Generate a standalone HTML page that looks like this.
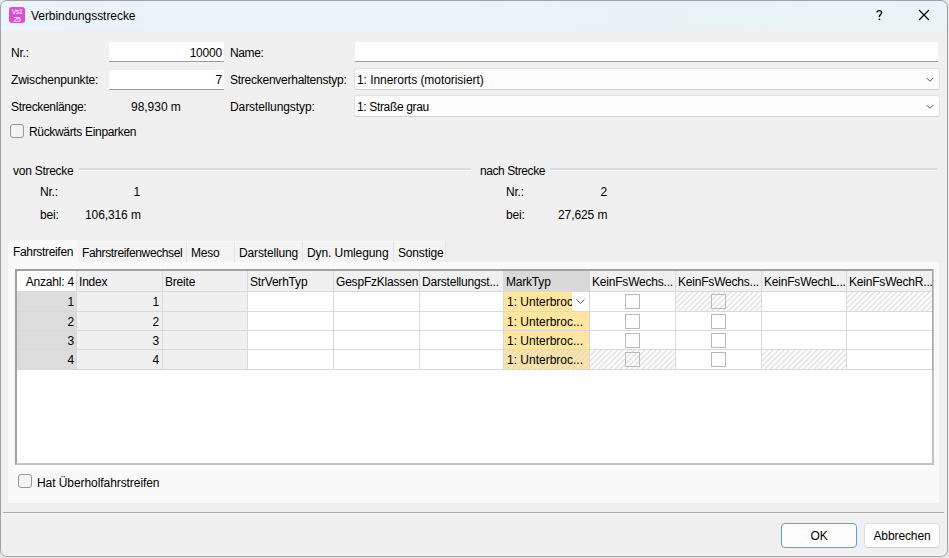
<!DOCTYPE html>
<html><head><meta charset="utf-8">
<style>
html,body{margin:0;padding:0;}
body{width:949px;height:558px;overflow:hidden;position:relative;background:#e6e6e6;font-family:"Liberation Sans",sans-serif;font-size:12px;color:#000;}
.a{position:absolute;}
.t{position:absolute;white-space:nowrap;line-height:14px;letter-spacing:-0.2px;}
#win{position:absolute;left:0;top:0;width:948px;height:557px;background:#f0f0f0;border-radius:7px;overflow:hidden;}
#frame{position:absolute;left:0;top:0;width:948px;height:557px;box-sizing:border-box;border:1px solid #a2a2a2;border-radius:7px;}
#title{position:absolute;left:0;top:0;width:948px;height:30px;background:linear-gradient(90deg,#ebf3fb 0%,#eaf3f8 50%,#e8f4f5 100%);}
.inp{position:absolute;background:#fff;border-bottom:1px solid #9c9c9c;border-radius:2px 2px 0 0;}
.cmb{position:absolute;background:#fdfdfd;border:1px solid #e3e3e3;border-bottom-color:#d0d0d0;border-radius:3px;box-sizing:border-box;width:586px!important;}
.cb{position:absolute;width:12px;height:12px;border:1px solid #979797;border-radius:3px;background:#f4f4f4;}
.hl{position:absolute;height:2px;background:#dcdcdc;box-shadow:0 1px 0 #f8f8f8;}
.tab{position:absolute;top:241px;height:21px;background:#f3f3f3;border-right:1px solid #e4e4e4;border-top:1px solid #f6f6f6;box-sizing:border-box;}
</style></head><body>
<div id="win">
  <div id="title">
    <div class="a" style="left:9px;top:7px;width:16px;height:16px;background:#d94fd3;border-radius:3px;"></div>
    <div class="a" style="left:9px;top:8px;width:16px;font-size:7px;line-height:7.5px;color:#fff;text-align:center;letter-spacing:-0.5px">Vs1<br>25</div>
    <div class="t" style="left:31px;top:9px;letter-spacing:-0.05px">Verbindungsstrecke</div>
    <svg class="a" style="left:876px;top:10px" width="7" height="11"><path d="M0.9 2.6C0.9 1.3 1.9 0.7 3.2 0.7C4.6 0.7 5.6 1.4 5.6 2.7C5.6 4.3 3.4 4.6 3.4 6.6V7" stroke="#000" stroke-width="1.3" fill="none"/><circle cx="3.4" cy="9.3" r="0.9" fill="#000"/></svg>
    <svg class="a" style="left:918px;top:9px" width="12" height="12"><path d="M1 1L11 11M11 1L1 11" stroke="#000" stroke-width="1.2"/></svg>
  </div>

  <!-- top fields -->
  <div class="t" style="left:11px;top:46px;">Nr.:</div>
  <div class="inp" style="left:109px;top:42px;width:115px;height:19px;"></div>
  <div class="t" style="left:109px;top:46px;width:113px;text-align:right;">10000</div>
  <div class="t" style="left:230px;top:46px;;letter-spacing:-0.4px">Name:</div>
  <div class="inp" style="left:355px;top:42px;width:583px;height:19px;"></div>

  <div class="t" style="left:11px;top:73px;;letter-spacing:-0.19px">Zwischenpunkte:</div>
  <div class="inp" style="left:109px;top:70px;width:115px;height:19px;"></div>
  <div class="t" style="left:109px;top:73px;width:113px;text-align:right;">7</div>
  <div class="t" style="left:230px;top:73px;;letter-spacing:-0.25px">Streckenverhaltenstyp:</div>
  <div class="cmb" style="left:354px;top:68px;width:585px;height:22px;"></div>
  <div class="t" style="left:357px;top:73px;;letter-spacing:-0.05px">1: Innerorts (motorisiert)</div>
  <svg class="a" style="left:926px;top:77px" width="9" height="6"><path d="M0.5 0.8L4 4.3L7.5 0.8" stroke="#5a5a5a" fill="none" stroke-width="1"/></svg>

  <div class="t" style="left:11px;top:100px;;letter-spacing:-0.34px">Streckenlänge:</div>
  <div class="t" style="left:131px;top:100px;;letter-spacing:-0.03px">98,930 m</div>
  <div class="t" style="left:230px;top:100px;;letter-spacing:-0.08px">Darstellungstyp:</div>
  <div class="cmb" style="left:354px;top:95px;width:585px;height:22px;"></div>
  <div class="t" style="left:357px;top:100px;;letter-spacing:-0.35px">1: Straße grau</div>
  <svg class="a" style="left:926px;top:104px" width="9" height="6"><path d="M0.5 0.8L4 4.3L7.5 0.8" stroke="#5a5a5a" fill="none" stroke-width="1"/></svg>

  <div class="cb" style="left:10px;top:124px;"></div>
  <div class="t" style="left:29px;top:125px;;letter-spacing:-0.33px">Rückwärts Einparken</div>

  <!-- groups -->
  <div class="t" style="left:13px;top:164px;;letter-spacing:-0.26px">von Strecke</div>
  <div class="hl" style="left:79px;top:168px;width:392px;"></div>
  <div class="t" style="left:40px;top:185px;">Nr.:</div>
  <div class="t" style="left:121px;top:185px;width:19px;text-align:right;">1</div>
  <div class="t" style="left:40px;top:208px;">bei:</div>
  <div class="t" style="left:85px;top:208px;;letter-spacing:-0.1px">106,316 m</div>

  <div class="t" style="left:480px;top:164px;;letter-spacing:-0.42px">nach Strecke</div>
  <div class="hl" style="left:550px;top:168px;width:388px;"></div>
  <div class="t" style="left:506px;top:185px;">Nr.:</div>
  <div class="t" style="left:587px;top:185px;width:20px;text-align:right;">2</div>
  <div class="t" style="left:506px;top:208px;">bei:</div>
  <div class="t" style="left:558px;top:208px;;letter-spacing:-0.09px">27,625 m</div>

  <!-- tabs -->
  <div class="a" style="left:8px;top:262px;width:931px;height:241px;background:#f9f9f9;"></div>
  <div class="tab" style="left:78px;width:109px;"></div>
  <div class="tab" style="left:187px;width:48px;"></div>
  <div class="tab" style="left:235px;width:68px;"></div>
  <div class="tab" style="left:303px;width:91px;"></div>
  <div class="tab" style="left:394px;width:52px;"></div>
  <div class="a" style="left:8px;top:240px;width:70px;height:23px;background:#f9f9f9;"></div>
  <div class="t" style="left:13px;top:245px;;letter-spacing:-0.33px">Fahrstreifen</div>
  <div class="t" style="left:82px;top:246px;;letter-spacing:-0.37px">Fahrstreifenwechsel</div>
  <div class="t" style="left:191px;top:246px;">Meso</div>
  <div class="t" style="left:239px;top:246px;;letter-spacing:-0.15px">Darstellung</div>
  <div class="t" style="left:307px;top:246px;;letter-spacing:-0.09px">Dyn. Umlegung</div>
  <div class="t" style="left:398px;top:246px;;letter-spacing:-0.16px">Sonstige</div>

  <!-- grid -->
  <div id="grid" class="a" style="left:15px;top:269px;width:919px;height:196px;box-sizing:border-box;background:#fff;border-top:2px solid #a0a0a0;border-left:2px solid #a0a0a0;border-right:2px solid #c4c4c4;border-bottom:2px solid #c4c4c4;"></div>
<!--GRID-->
<svg width="0" height="0" style="position:absolute"><defs><pattern id="hatch" patternUnits="userSpaceOnUse" width="5.5" height="5.5"><path d="M-1 6.5L6.5 -1M-1 1L1 -1M4.5 6.5L6.5 4.5" stroke="#d3d3d3" stroke-width="1"/></pattern></defs></svg>
<div class="a" style="left:76px;top:271px;width:1px;height:99px;background:#d9d9d9"></div>
<div class="a" style="left:162px;top:271px;width:1px;height:99px;background:#d9d9d9"></div>
<div class="a" style="left:247px;top:271px;width:1px;height:99px;background:#d9d9d9"></div>
<div class="a" style="left:333px;top:271px;width:1px;height:99px;background:#d9d9d9"></div>
<div class="a" style="left:419px;top:271px;width:1px;height:99px;background:#d9d9d9"></div>
<div class="a" style="left:503px;top:271px;width:1px;height:99px;background:#d9d9d9"></div>
<div class="a" style="left:589px;top:271px;width:1px;height:99px;background:#d9d9d9"></div>
<div class="a" style="left:675px;top:271px;width:1px;height:99px;background:#d9d9d9"></div>
<div class="a" style="left:761px;top:271px;width:1px;height:99px;background:#d9d9d9"></div>
<div class="a" style="left:846px;top:271px;width:1px;height:99px;background:#d9d9d9"></div>
<div class="a" style="left:17px;top:291px;width:915px;height:1px;background:#d9d9d9"></div>
<div class="a" style="left:17px;top:311px;width:915px;height:1px;background:#d9d9d9"></div>
<div class="a" style="left:17px;top:330px;width:915px;height:1px;background:#d9d9d9"></div>
<div class="a" style="left:17px;top:349px;width:915px;height:1px;background:#d9d9d9"></div>
<div class="a" style="left:17px;top:369px;width:915px;height:1px;background:#d9d9d9"></div>
<div class="a" style="left:17px;top:271px;width:59px;height:20px;background:#ffffff"></div>
<div class="t" style="left:17px;top:275px;width:57px;text-align:right">Anzahl: 4</div>
<div class="a" style="left:77px;top:271px;width:85px;height:20px;background:#f0f0f0"></div>
<div class="t" style="left:79px;top:275px;">Index</div>
<div class="a" style="left:163px;top:271px;width:84px;height:20px;background:#f0f0f0"></div>
<div class="t" style="left:165px;top:275px;">Breite</div>
<div class="a" style="left:248px;top:271px;width:85px;height:20px;background:#f0f0f0"></div>
<div class="t" style="left:250px;top:275px;">StrVerhTyp</div>
<div class="a" style="left:334px;top:271px;width:85px;height:20px;background:#f0f0f0"></div>
<div class="t" style="left:336px;top:275px;">GespFzKlassen</div>
<div class="a" style="left:420px;top:271px;width:83px;height:20px;background:#f0f0f0"></div>
<div class="t" style="left:422px;top:275px;">Darstellungst...</div>
<div class="a" style="left:504px;top:271px;width:85px;height:20px;background:#d9d9d9"></div>
<div class="t" style="left:506px;top:275px;">MarkTyp</div>
<div class="a" style="left:590px;top:271px;width:85px;height:20px;background:#f0f0f0"></div>
<div class="t" style="left:592px;top:275px;">KeinFsWechs...</div>
<div class="a" style="left:676px;top:271px;width:85px;height:20px;background:#f0f0f0"></div>
<div class="t" style="left:678px;top:275px;">KeinFsWechs...</div>
<div class="a" style="left:762px;top:271px;width:84px;height:20px;background:#f0f0f0"></div>
<div class="t" style="left:764px;top:275px;">KeinFsWechL...</div>
<div class="a" style="left:847px;top:271px;width:85px;height:20px;background:#f0f0f0"></div>
<div class="t" style="left:849px;top:275px;">KeinFsWechR...</div>
<div class="a" style="left:17px;top:292px;width:59px;height:19px;background-color:#dcdcdc;"></div>
<div class="a" style="left:77px;top:292px;width:85px;height:19px;background-color:#f0f0f0;"></div>
<div class="a" style="left:163px;top:292px;width:84px;height:19px;background-color:#f0f0f0;"></div>
<div class="a" style="left:248px;top:292px;width:85px;height:19px;background-color:#fff;"></div>
<div class="a" style="left:334px;top:292px;width:85px;height:19px;background-color:#fff;"></div>
<div class="a" style="left:420px;top:292px;width:83px;height:19px;background-color:#fff;"></div>
<div class="a" style="left:504px;top:292px;width:85px;height:19px;background-color:#fee5a0;"></div>
<div class="a" style="left:590px;top:292px;width:85px;height:19px;background-color:#fff;"></div>
<div class="a" style="left:676px;top:292px;width:85px;height:19px;background-color:#fff;"></div>
<svg class="a" style="left:676px;top:292px" width="85" height="19"><rect width="85" height="19" fill="url(#hatch)"/></svg>
<div class="a" style="left:762px;top:292px;width:84px;height:19px;background-color:#fff;"></div>
<div class="a" style="left:847px;top:292px;width:85px;height:19px;background-color:#fff;"></div>
<svg class="a" style="left:847px;top:292px" width="85" height="19"><rect width="85" height="19" fill="url(#hatch)"/></svg>
<div class="t" style="left:17px;top:295px;width:57px;text-align:right">1</div>
<div class="t" style="left:77px;top:295px;width:82px;text-align:right">1</div>
<div class="a" style="left:504px;top:292px;width:68px;height:19px;overflow:hidden"><div class="t" style="left:3px;top:3px;letter-spacing:0">1: Unterbroch</div></div>
<div class="a" style="left:572px;top:292px;width:17px;height:19px;background:#fff"></div>
<svg class="a" style="left:576px;top:299px" width="9" height="6"><path d="M0.5 0.5L4.5 4.5L8.5 0.5" stroke="#666" fill="none" stroke-width="1"/></svg>
<div class="a" style="left:625px;top:294px;width:13px;height:13px;border:1px solid #bababa;box-sizing:content-box"></div>
<div class="a" style="left:711px;top:294px;width:13px;height:13px;border:1px solid #bababa;box-sizing:content-box"></div>
<div class="a" style="left:17px;top:312px;width:59px;height:18px;background-color:#dcdcdc;"></div>
<div class="a" style="left:77px;top:312px;width:85px;height:18px;background-color:#f0f0f0;"></div>
<div class="a" style="left:163px;top:312px;width:84px;height:18px;background-color:#f0f0f0;"></div>
<div class="a" style="left:248px;top:312px;width:85px;height:18px;background-color:#fff;"></div>
<div class="a" style="left:334px;top:312px;width:85px;height:18px;background-color:#fff;"></div>
<div class="a" style="left:420px;top:312px;width:83px;height:18px;background-color:#fff;"></div>
<div class="a" style="left:504px;top:312px;width:85px;height:18px;background-color:#fee5a0;"></div>
<div class="a" style="left:590px;top:312px;width:85px;height:18px;background-color:#fff;"></div>
<div class="a" style="left:676px;top:312px;width:85px;height:18px;background-color:#fff;"></div>
<div class="a" style="left:762px;top:312px;width:84px;height:18px;background-color:#fff;"></div>
<div class="a" style="left:847px;top:312px;width:85px;height:18px;background-color:#fff;"></div>
<div class="t" style="left:17px;top:315px;width:57px;text-align:right">2</div>
<div class="t" style="left:77px;top:315px;width:82px;text-align:right">2</div>
<div class="t" style="left:507px;top:315px;letter-spacing:0">1: Unterbroc...</div>
<div class="a" style="left:625px;top:314px;width:13px;height:13px;border:1px solid #bababa;box-sizing:content-box"></div>
<div class="a" style="left:711px;top:314px;width:13px;height:13px;border:1px solid #bababa;box-sizing:content-box"></div>
<div class="a" style="left:17px;top:331px;width:59px;height:18px;background-color:#dcdcdc;"></div>
<div class="a" style="left:77px;top:331px;width:85px;height:18px;background-color:#f0f0f0;"></div>
<div class="a" style="left:163px;top:331px;width:84px;height:18px;background-color:#f0f0f0;"></div>
<div class="a" style="left:248px;top:331px;width:85px;height:18px;background-color:#fff;"></div>
<div class="a" style="left:334px;top:331px;width:85px;height:18px;background-color:#fff;"></div>
<div class="a" style="left:420px;top:331px;width:83px;height:18px;background-color:#fff;"></div>
<div class="a" style="left:504px;top:331px;width:85px;height:18px;background-color:#fee5a0;"></div>
<div class="a" style="left:590px;top:331px;width:85px;height:18px;background-color:#fff;"></div>
<div class="a" style="left:676px;top:331px;width:85px;height:18px;background-color:#fff;"></div>
<div class="a" style="left:762px;top:331px;width:84px;height:18px;background-color:#fff;"></div>
<div class="a" style="left:847px;top:331px;width:85px;height:18px;background-color:#fff;"></div>
<div class="t" style="left:17px;top:334px;width:57px;text-align:right">3</div>
<div class="t" style="left:77px;top:334px;width:82px;text-align:right">3</div>
<div class="t" style="left:507px;top:334px;letter-spacing:0">1: Unterbroc...</div>
<div class="a" style="left:625px;top:333px;width:13px;height:13px;border:1px solid #bababa;box-sizing:content-box"></div>
<div class="a" style="left:711px;top:333px;width:13px;height:13px;border:1px solid #bababa;box-sizing:content-box"></div>
<div class="a" style="left:17px;top:350px;width:59px;height:19px;background-color:#dcdcdc;"></div>
<div class="a" style="left:77px;top:350px;width:85px;height:19px;background-color:#f0f0f0;"></div>
<div class="a" style="left:163px;top:350px;width:84px;height:19px;background-color:#f0f0f0;"></div>
<div class="a" style="left:248px;top:350px;width:85px;height:19px;background-color:#fff;"></div>
<div class="a" style="left:334px;top:350px;width:85px;height:19px;background-color:#fff;"></div>
<div class="a" style="left:420px;top:350px;width:83px;height:19px;background-color:#fff;"></div>
<div class="a" style="left:504px;top:350px;width:85px;height:19px;background-color:#fee5a0;"></div>
<svg class="a" style="left:504px;top:350px" width="85" height="19"><rect width="85" height="19" fill="url(#hatch)"/></svg>
<div class="a" style="left:590px;top:350px;width:85px;height:19px;background-color:#fff;"></div>
<svg class="a" style="left:590px;top:350px" width="85" height="19"><rect width="85" height="19" fill="url(#hatch)"/></svg>
<div class="a" style="left:676px;top:350px;width:85px;height:19px;background-color:#fff;"></div>
<div class="a" style="left:762px;top:350px;width:84px;height:19px;background-color:#fff;"></div>
<svg class="a" style="left:762px;top:350px" width="84" height="19"><rect width="84" height="19" fill="url(#hatch)"/></svg>
<div class="a" style="left:847px;top:350px;width:85px;height:19px;background-color:#fff;"></div>
<div class="t" style="left:17px;top:353px;width:57px;text-align:right">4</div>
<div class="t" style="left:77px;top:353px;width:82px;text-align:right">4</div>
<div class="t" style="left:507px;top:353px;letter-spacing:0">1: Unterbroc...</div>
<div class="a" style="left:625px;top:352px;width:13px;height:13px;border:1px solid #bababa;box-sizing:content-box"></div>
<div class="a" style="left:711px;top:352px;width:13px;height:13px;border:1px solid #bababa;box-sizing:content-box"></div>
<div class="a" style="left:932px;top:271px;width:1px;height:99px;background:#a4a4a4"></div>
<!--/GRID-->


  <div class="cb" style="left:18px;top:474px;"></div>
  <div class="t" style="left:37px;top:476px;;letter-spacing:-0.07px">Hat Überholfahrstreifen</div>

  <div class="a" style="left:3px;top:512px;width:941px;height:1px;background:#a9a9a9;box-shadow:0 1px 0 #fafafa;"></div>

  <div class="a" style="left:781px;top:523px;width:74px;height:23px;background:#fdfdfd;border:1px solid #5b9ee4;border-radius:4px;"></div>
  <div class="t" style="left:781px;top:529px;width:76px;text-align:center;">OK</div>
  <div class="a" style="left:864px;top:523px;width:74px;height:23px;background:#fdfdfd;border:1px solid #e0e0e0;border-bottom-color:#cfcfcf;border-radius:4px;"></div>
  <div class="t" style="left:864px;top:529px;width:76px;text-align:center;;letter-spacing:-0.11px">Abbrechen</div>
</div>
<div id="frame"></div>
</body></html>
